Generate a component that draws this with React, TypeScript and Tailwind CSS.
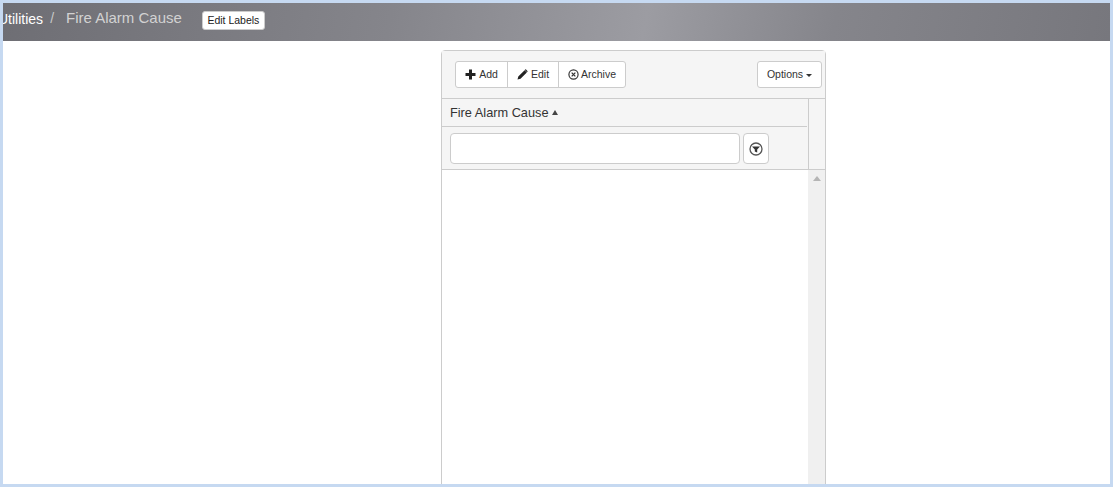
import React from "react";

export default function App() {
  return (
    <div className="h-[487px] w-[1113px] overflow-hidden border-[3px] border-[#c6d9f1] bg-white font-['Liberation_Sans',sans-serif]">
      <div className="flex h-[38px] items-start overflow-hidden bg-[linear-gradient(100deg,#6e6e74_0%,#85858b_35%,#9c9ca2_58%,#85858b_75%,#77777d_100%)]">
        <span className="-ml-[5px] mt-[9px] text-[14px] leading-[14px] text-white">Utilities</span>
        <span className="ml-[7px] mt-[8px] text-[14px] leading-[14px] text-[#c8c8c8]">/</span>
        <span className="ml-[12px] mt-[7px] text-[15px] leading-[15px] text-[#d2d2d2]">Fire Alarm Cause</span>
        <button className="ml-[20px] mt-[8px] flex h-[19px] w-[63px] items-center justify-center rounded-[3px] border border-[#ccc] bg-white text-[10.5px] text-[#222]">Edit Labels</button>
      </div>

      <div className="flex pl-[438px]">
        <div className="mt-[9px] flex h-[500px] w-[385px] flex-col rounded-t-[4px] border border-[#ccc] bg-white">
          <div className="flex h-[48px] shrink-0 items-center justify-between border-b border-[#ccc] bg-[#f5f5f5] pl-[13px] pr-[3px]">
            <div className="flex h-[27px] rounded-[3px] border border-[#ccc] bg-white text-[10.5px] text-[#333]">
              <button className="flex w-[52px] items-center justify-center gap-[3px] border-r border-[#ccc]">
                <svg width="11" height="11" viewBox="0 0 11 11">
                  <path d="M4 0.5h3v3.5h3.5v3H7v3.5H4V7H0.5V4H4z" fill="#222" />
                </svg>
                <span>Add</span>
              </button>
              <button className="flex w-[51px] items-center justify-center gap-[3px] border-r border-[#ccc]">
                <svg width="11" height="11" viewBox="0 0 11 11">
                  <path d="M0.5 10.5l0.8-3L7.6 1.2l2.2 2.2L3.5 9.7zM8.2 0.6l0.6-0.3 1.9 1.9-0.3 0.6-0.4 0.4-2.2-2.2z" fill="#222" />
                </svg>
                <span>Edit</span>
              </button>
              <button className="flex w-[66px] items-center justify-center gap-[2px]">
                <svg width="11" height="11" viewBox="0 0 12 12" fill="none" stroke="#333">
                  <circle cx="6" cy="6" r="5" strokeWidth="1.3" />
                  <path d="M4 4l4 4M8 4l-4 4" strokeWidth="1.4" />
                </svg>
                <span>Archive</span>
              </button>
            </div>
            <button className="flex h-[27px] w-[65px] items-center justify-center gap-[3px] rounded-[3px] border border-[#ccc] bg-white text-[10.5px] text-[#333]">
              <span>Options</span>
              <span className="mt-[1px] h-0 w-0 border-x-[3px] border-t-[3px] border-x-transparent border-t-[#333]" />
            </button>
          </div>

          <div className="flex h-[71px] shrink-0 border-b border-[#ccc] bg-[#f5f5f5]">
            <div className="flex w-[366px] flex-col">
              <div className="mr-[1px] flex h-[28px] items-center gap-[3px] border-b border-[#ccc] pl-[8px] text-[12.75px] text-[#333]">
                <span>Fire Alarm Cause</span>
                <span className="h-0 w-0 border-x-[3px] border-b-[5px] border-x-transparent border-b-[#444]" />
              </div>
              <div className="flex flex-1 items-center gap-[3px] pl-[8px]">
                <div className="h-[31px] w-[290px] rounded-[4px] border border-[#ccc] bg-white" />
                <button className="flex h-[31px] w-[26px] items-center justify-center rounded-[4px] border border-[#ccc] bg-white pt-[1px]">
                  <svg width="14" height="14" viewBox="0 0 14 14">
                    <circle cx="7" cy="7" r="6" fill="none" stroke="#555" strokeWidth="1.3" />
                    <path d="M3 4.5h8L8.2 7.6V10.5L5.8 9.5V7.6z" fill="#333" />
                  </svg>
                </button>
              </div>
            </div>
            <div className="flex-1 border-l border-[#ccc]" />
          </div>

          <div className="flex flex-1 justify-end">
            <div className="flex h-full w-[17px] justify-center bg-[#f0f0f0] pt-[6px]">
              <span className="h-0 w-0 border-x-[4px] border-b-[5px] border-x-transparent border-b-[#b5b5b5]" />
            </div>
          </div>
        </div>
      </div>
    </div>
  );
}
